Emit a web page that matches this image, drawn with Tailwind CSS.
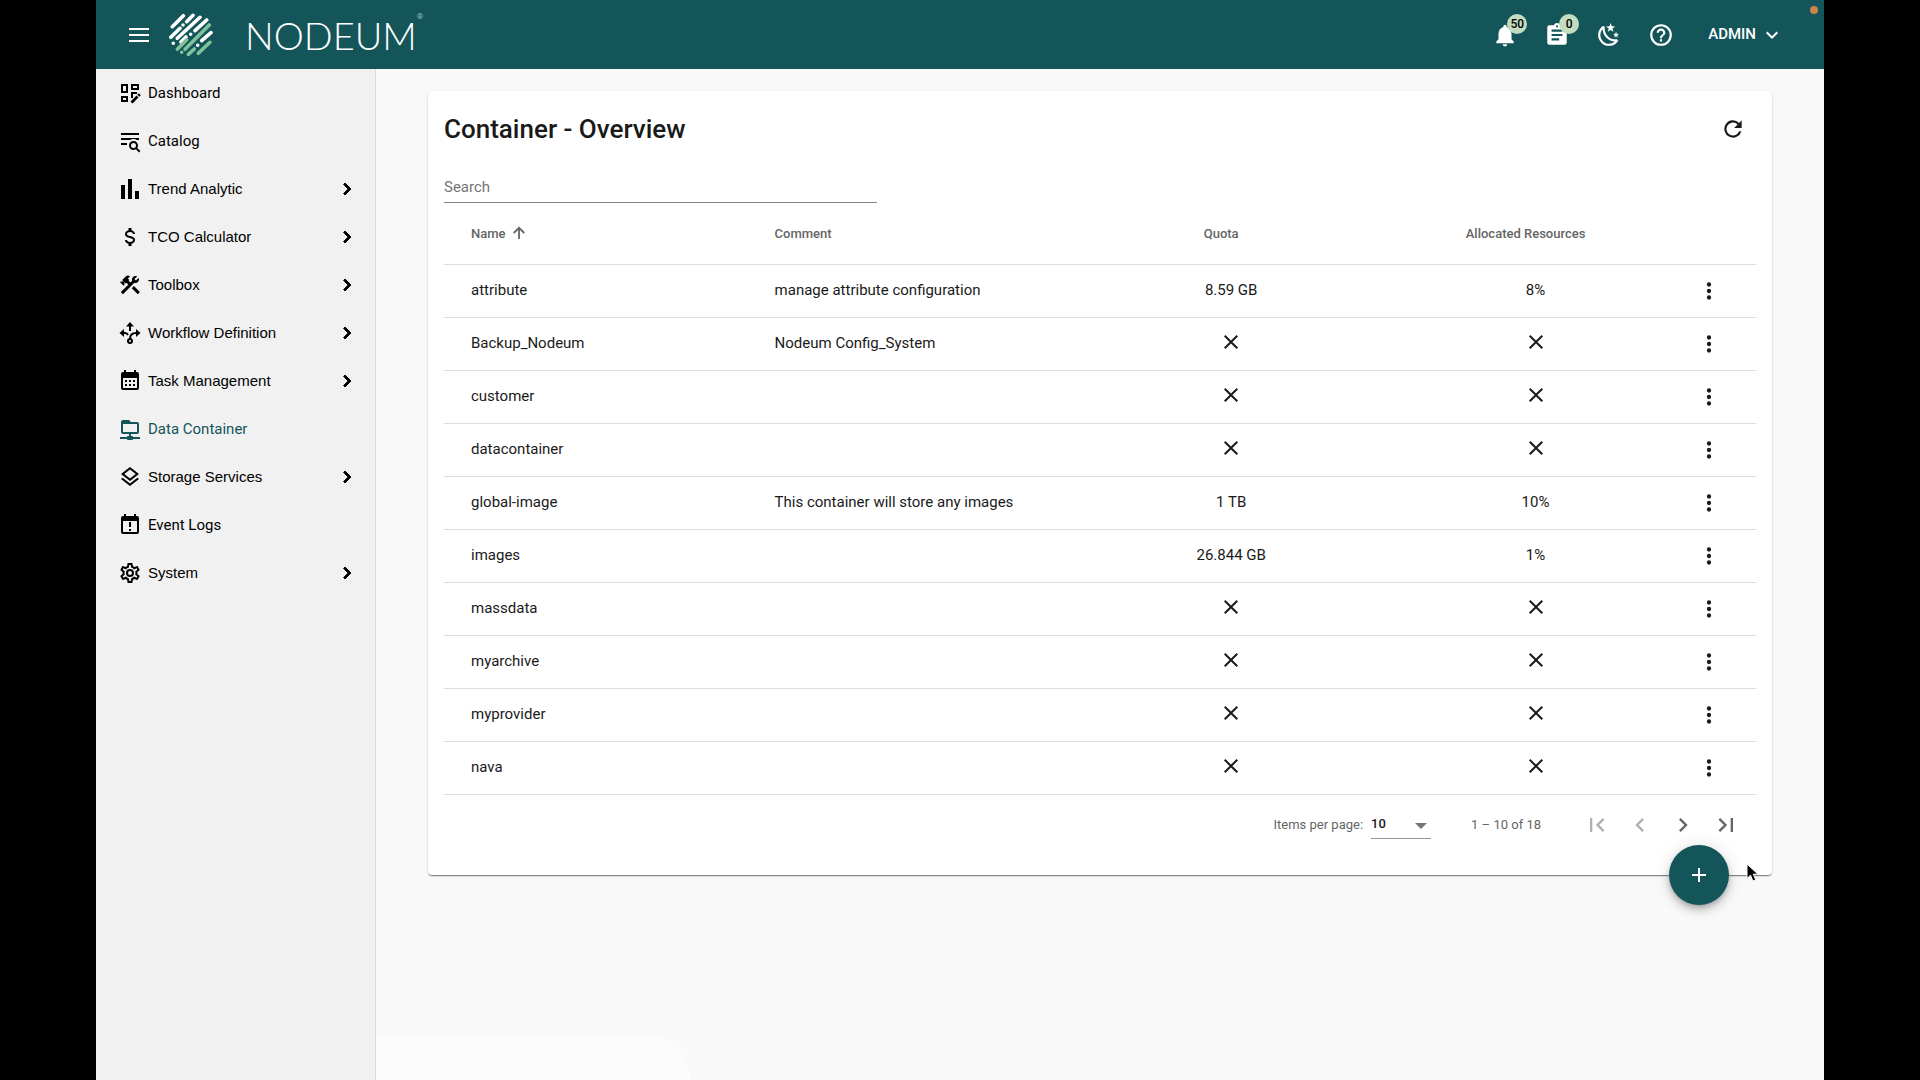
<!DOCTYPE html>
<html lang="en">
<head>
    <meta charset="UTF-8">
    <meta name="viewport" content="width=device-width, initial-scale=1.0">
    <title>Nodeum - Container Overview</title>
    <script src="https://cdn.jsdelivr.net/npm/@tailwindcss/browser@4"></script>
</head>
<body class="bg-black min-h-screen px-24 font-['Roboto',sans-serif] text-[#1a1a1a]">
    <!-- Shared icons -->
    <svg class="hidden" aria-hidden="true">
        <symbol id="chevron" viewBox="0 0 24 24"><path d="M8.59 16.58 13.17 12 8.59 7.41 10 6l6 6-6 6z"/></symbol>
        <symbol id="cross" viewBox="0 0 24 24"><path d="M19 6.41 17.59 5 12 10.59 6.41 5 5 6.41 10.59 12 5 17.59 6.41 19 12 13.41 17.59 19 19 17.59 13.41 12z"/></symbol>
        <symbol id="more" viewBox="0 0 24 24"><path d="M12 8a2 2 0 1 0 0-4 2 2 0 0 0 0 4zm0 2a2 2 0 1 0 0 4 2 2 0 0 0 0-4zm0 6a2 2 0 1 0 0 4 2 2 0 0 0 0-4z"/></symbol>
    </svg>

    <div class="relative min-h-screen flex flex-col bg-[#f9f9f9]">
        <!-- Header -->
        <header class="relative h-[69px] shrink-0 flex items-center justify-between bg-[#14555a] text-white pl-[31px] pr-10">
            <div class="flex items-center">
                <button aria-label="Toggle menu">
                    <svg class="w-6 h-6" fill="currentColor" viewBox="0 0 24 24"><path d="M2 5h20v2H2zM2 11h20v2H2zM2 17h20v2H2z"/></svg>
                </button>
                <a href="#" class="flex items-center ml-4.5" aria-label="Nodeum home">
                    <svg class="w-11 h-11" viewBox="0 0 44 44" fill="none" stroke="#fff" stroke-width="3.6" stroke-linecap="round">
                        <path d="M3.300 13.700 14.300 2.700M14 12v.01M17.700 8.700 24 2.300M1.800 24.300 11 15.300M8.300 25.300 31 4.300M4.300 30.300v.01M21.700 21.300v.01M12 29 17 24M26 17.700 37.700 7M28.700 32.300v.01M32.700 27.700 42 19.700"/>
                        <path stroke="#7fc29b" d="M8.300 36.300 17.700 26.800M12.700 39.300v.01M16 36.300 40.300 12M19.300 41.300 25.300 36M29.300 40.300 41 29.300"/>
                    </svg>
                    <span class="ml-8 text-[38px] leading-none font-['Lato',sans-serif] font-light">NODEUM</span>
                    <span class="self-start text-[8px] leading-none text-[#9cc5bd]">®</span>
                </a>
            </div>
            <div class="flex items-center gap-[26px]">
                <button class="relative" aria-label="Notifications">
                    <svg class="w-[26px] h-[26px]" fill="currentColor" viewBox="0 0 24 24"><path d="M20 18v1.500H4V18l2-2v-5c0-3.100 1.630-5.640 4.500-6.320V4a1.500 1.500 0 0 1 3 0v.68C16.370 5.360 18 7.920 18 11v5l2 2m-6 2.500a2 2 0 0 1-4 0z"/></svg>
                    <span class="absolute -top-2 left-[15px] w-5 h-5 rounded-full bg-[#c2dcbf] text-black text-xs leading-5 font-medium">50</span>
                </button>
                <button class="relative" aria-label="Tasks">
                    <svg class="w-[26px] h-[26px]" fill="currentColor" viewBox="0 0 24 24"><path d="M19 3h-4.180C14.400 1.840 13.300 1 12 1s-2.400.840-2.820 2H5a2 2 0 0 0-2 2v14a2 2 0 0 0 2 2h14a2 2 0 0 0 2-2V5a2 2 0 0 0-2-2m-7 0a1 1 0 1 1 0 2 1 1 0 0 1 0-2m2 14H7v-2h7v2m3-4H7v-2h10v2m0-4H7V7h10v2z"/></svg>
                    <span class="absolute -top-2 left-[15px] w-5 h-5 rounded-full bg-[#c2dcbf] text-black text-xs leading-5 font-medium">0</span>
                </button>
                <button aria-label="Dark mode">
                    <svg class="w-[26px] h-[26px]" fill="currentColor" viewBox="0 0 24 24"><path d="M17.75,4.09L15.22,6.03L16.13,9.09L13.5,7.28L10.87,9.09L11.78,6.03L9.25,4.09L12.44,4L13.5,1L14.56,4L17.75,4.09M21.25,11L19.61,12.25L20.2,14.23L18.5,13.06L16.8,14.23L17.39,12.25L15.75,11L17.81,10.95L18.5,9L19.19,10.95L21.25,11M18.97,15.95C19.8,15.87 20.69,17.05 20.16,17.8C19.84,18.25 19.5,18.67 19.08,19.07C15.17,23 8.84,23 4.94,19.07C1.03,15.17 1.03,8.83 4.94,4.93C5.34,4.53 5.76,4.17 6.21,3.85C6.96,3.32 8.14,4.21 8.06,5.04C7.79,7.9 8.75,10.87 10.95,13.06C13.14,15.26 16.1,16.22 18.97,15.95M17.33,17.97C14.5,17.81 11.7,16.64 9.53,14.5C7.36,12.31 6.2,9.5 6.04,6.68C3.23,9.82 3.34,14.64 6.35,17.66C9.37,20.67 14.19,20.78 17.33,17.97Z"/></svg>
                </button>
                <button aria-label="Help">
                    <svg class="w-[26px] h-[26px]" fill="currentColor" viewBox="0 0 24 24"><path d="M11 18h2v-2h-2v2m1-16a10 10 0 1 0 0 20 10 10 0 0 0 0-20m0 18a8 8 0 1 1 0-16 8 8 0 0 1 0 16m0-14a4 4 0 0 0-4 4h2a2 2 0 1 1 4 0c0 2-3 1.750-3 5h2c0-2.250 3-2.500 3-5a4 4 0 0 0-4-4z"/></svg>
                </button>
                <button class="flex items-center gap-1 ml-2 font-medium text-[15px]">ADMIN
                    <svg class="w-6 h-6 rotate-90" fill="currentColor"><use href="#chevron"/></svg>
                </button>
            </div>
            <span class="absolute top-1.5 right-1.5 w-2 h-2 rounded-full bg-[#c8844a]"></span>
        </header>

        <div class="flex flex-1">
            <!-- Sidebar -->
            <nav class="w-70 shrink-0 bg-[#f1f1f1] border-r border-[#d9d9d9] text-[15px] text-black" aria-label="Main">
                <a href="#" class="flex items-center h-12 pl-[22px] pr-4 gap-1.5">
                    <svg class="w-6 h-6" fill="none" stroke="currentColor" stroke-width="2" viewBox="0 0 24 24"><path d="M4 4h5v7H4zM14 4h6v4h-6zM4 16h5v4H4zM14 17v-5h5"/><path d="M13.500 21.500 19.500 15.500M20.300 14.700l1.500-1.500" stroke-width="2.800"/></svg>
                    Dashboard
                </a>
                <a href="#" class="flex items-center h-12 pl-[22px] pr-4 gap-1.5">
                    <svg class="w-6 h-6" fill="currentColor" viewBox="0 0 24 24"><path d="M19.31 18.9L22.39 22L21 23.39L17.88 20.32C17.19 20.75 16.37 21 15.5 21C13 21 11 19 11 16.5C11 14 13 12 15.5 12C18 12 20 14 20 16.5C20 17.38 19.75 18.21 19.31 18.9M15.5 19A2.5 2.5 0 0 0 18 16.5A2.5 2.5 0 0 0 15.5 14A2.5 2.5 0 0 0 13 16.5A2.5 2.5 0 0 0 15.5 19M21 4V6H3V4H21M3 16V14H9V16H3M3 11V9H21V11H18.97C17.96 10.37 16.77 10 15.5 10C14.23 10 13.04 10.37 12.03 11H3Z"/></svg>
                    Catalog
                </a>
                <button class="flex items-center w-full h-12 pl-[22px] pr-4 gap-1.5 font-['Liberation_Sans',sans-serif]">
                    <svg class="w-6 h-6" fill="currentColor" viewBox="0 0 24 24"><path d="M3 8h4v14H3zM10 2h4v20h-4zM17 14h4v8h-4z"/></svg>
                    Trend Analytic
                    <svg class="w-6 h-6 ml-auto" fill="currentColor" stroke="currentColor"><use href="#chevron"/></svg>
                </button>
                <button class="flex items-center w-full h-12 pl-[22px] pr-4 gap-1.5 font-['Liberation_Sans',sans-serif]">
                    <svg class="w-6 h-6" fill="currentColor" viewBox="0 0 24 24"><path d="M7,15H9C9,16.08 10.37,17 12,17C13.63,17 15,16.08 15,15C15,13.9 13.96,13.5 11.76,12.97C9.64,12.44 7,11.78 7,9C7,7.21 8.47,5.69 10.5,5.18V3H13.5V5.18C15.53,5.69 17,7.21 17,9H15C15,7.92 13.63,7 12,7C10.37,7 9,7.92 9,9C9,10.1 10.04,10.5 12.24,11.03C14.36,11.56 17,12.22 17,15C17,16.79 15.53,18.31 13.5,18.82V21H10.5V18.82C8.47,18.31 7,16.79 7,15Z"/></svg>
                    TCO Calculator
                    <svg class="w-6 h-6 ml-auto" fill="currentColor" stroke="currentColor"><use href="#chevron"/></svg>
                </button>
                <button class="flex items-center w-full h-12 pl-[22px] pr-4 gap-1.5 font-['Liberation_Sans',sans-serif]">
                    <svg class="w-6 h-6" fill="currentColor" viewBox="0 0 24 24"><path d="M13.783 15.172l2.121-2.121 5.996 5.996-2.121 2.121zM17.5 10c1.93 0 3.5-1.57 3.5-3.5 0-.58-.16-1.12-.41-1.6l-2.7 2.7-1.49-1.49 2.7-2.7c-.48-.25-1.02-.41-1.6-.41C15.57 3 14 4.57 14 6.5c0 .41.08.8.21 1.16l-1.85 1.85-1.78-1.78.71-.71-1.41-1.41L12 3.49c-1.17-1.17-3.07-1.17-4.24 0L4.22 7.03l1.41 1.41H2.81l-.71.71 3.54 3.54.71-.71V9.15l1.41 1.41.71-.71 1.78 1.78-7.41 7.41 2.12 2.12L16.34 9.79c.36.13.75.21 1.16.21z"/></svg>
                    Toolbox
                    <svg class="w-6 h-6 ml-auto" fill="currentColor" stroke="currentColor"><use href="#chevron"/></svg>
                </button>
                <button class="flex items-center w-full h-12 pl-[22px] pr-4 gap-1.5 font-['Liberation_Sans',sans-serif]">
                    <svg class="w-6 h-6" fill="none" stroke="currentColor" stroke-width="2" viewBox="0 0 24 24"><path d="M12 4v6M4 12h3q2 0 3 2M20 12h-2q-6 0-6 6"/><circle cx="12" cy="20" r="2"/><path fill="currentColor" stroke="none" d="M12 1l4 4.500H8zM1.500 12 6 8v8zM22.500 12 18 8v8z"/></svg>
                    Workflow Definition
                    <svg class="w-6 h-6 ml-auto" fill="currentColor" stroke="currentColor"><use href="#chevron"/></svg>
                </button>
                <button class="flex items-center w-full h-12 pl-[22px] pr-4 gap-1.5 font-['Liberation_Sans',sans-serif]">
                    <svg class="w-6 h-6" fill="currentColor" viewBox="0 0 24 24"><path d="M19 3h-1V1h-2v2H8V1H6v2H5a2 2 0 0 0-2 2v14a2 2 0 0 0 2 2h14a2 2 0 0 0 2-2V5a2 2 0 0 0-2-2m0 16H5V9h14zM7 11h2v2H7zm4 0h2v2h-2zm4 0h2v2h-2zm-8 4h2v2H7zm4 0h2v2h-2zm4 0h2v2h-2z"/></svg>
                    Task Management
                    <svg class="w-6 h-6 ml-auto" fill="currentColor" stroke="currentColor"><use href="#chevron"/></svg>
                </button>
                <a href="#" class="flex items-center h-12 pl-[22px] pr-4 gap-1.5 text-[#14555a]" aria-current="page">
                    <svg class="w-6 h-6" fill="currentColor" viewBox="0 0 24 24"><path d="M15 20C15 19.45 14.55 19 14 19H13V17H19C20.11 17 21 16.11 21 15V7C21 5.9 20.11 5 19 5H13L11 3H5C3.9 3 3 3.9 3 5V15C3 16.11 3.9 17 5 17H11V19H10C9.45 19 9 19.45 9 20H2V22H9C9 22.55 9.45 23 10 23H14C14.55 23 15 22.55 15 22H22V20H15M5 15V7H19V15H5Z"/></svg>
                    Data Container
                </a>
                <button class="flex items-center w-full h-12 pl-[22px] pr-4 gap-1.5 font-['Liberation_Sans',sans-serif]">
                    <svg class="w-6 h-6" fill="currentColor" viewBox="0 0 24 24"><path d="M12,18.54L19.37,12.8L21,14.07L12,21.07L3,14.07L4.62,12.81L12,18.54M12,16L3,9L12,2L21,9L12,16M12,4.53L6.26,9L12,13.47L17.74,9L12,4.53Z"/></svg>
                    Storage Services
                    <svg class="w-6 h-6 ml-auto" fill="currentColor" stroke="currentColor"><use href="#chevron"/></svg>
                </button>
                <a href="#" class="flex items-center h-12 pl-[22px] pr-4 gap-1.5">
                    <svg class="w-6 h-6" fill="currentColor" viewBox="0 0 24 24"><path d="M19 3h-1V1h-2v2H8V1H6v2H5a2 2 0 0 0-2 2v14a2 2 0 0 0 2 2h14a2 2 0 0 0 2-2V5a2 2 0 0 0-2-2m0 16H5V8h14zM11 9h2v5h-2zM11 16h2v2h-2z"/></svg>
                    Event Logs
                </a>
                <button class="flex items-center w-full h-12 pl-[22px] pr-4 gap-1.5 font-['Liberation_Sans',sans-serif]">
                    <svg class="w-6 h-6" fill="currentColor" viewBox="0 0 24 24"><path d="M12,8A4,4 0 0,1 16,12A4,4 0 0,1 12,16A4,4 0 0,1 8,12A4,4 0 0,1 12,8M12,10A2,2 0 0,0 10,12A2,2 0 0,0 12,14A2,2 0 0,0 14,12A2,2 0 0,0 12,10M10,22C9.75,22 9.54,21.82 9.5,21.58L9.13,18.93C8.5,18.68 7.96,18.34 7.44,17.94L4.95,18.95C4.73,19.03 4.46,18.95 4.34,18.73L2.34,15.27C2.21,15.05 2.27,14.78 2.46,14.63L4.57,12.97L4.5,12L4.57,11L2.46,9.37C2.27,9.22 2.21,8.95 2.34,8.73L4.34,5.27C4.46,5.05 4.73,4.96 4.95,5.05L7.44,6.05C7.96,5.66 8.5,5.32 9.13,5.07L9.5,2.42C9.54,2.18 9.75,2 10,2H14C14.25,2 14.46,2.18 14.5,2.42L14.87,5.07C15.5,5.32 16.04,5.66 16.56,6.05L19.05,5.05C19.27,4.96 19.54,5.05 19.66,5.27L21.66,8.73C21.79,8.95 21.73,9.22 21.54,9.37L19.43,11L19.5,12L19.43,13L21.54,14.63C21.73,14.78 21.79,15.05 21.66,15.27L19.66,18.73C19.54,18.95 19.27,19.04 19.05,18.95L16.56,17.95C16.04,18.34 15.5,18.68 14.87,18.93L14.5,21.58C14.46,21.82 14.25,22 14,22H10M11.25,4L10.88,6.61C9.68,6.86 8.62,7.5 7.85,8.39L5.44,7.35L4.69,8.65L6.8,10.2C6.4,11.37 6.4,12.64 6.8,13.8L4.68,15.36L5.43,16.66L7.86,15.62C8.63,16.5 9.68,17.14 10.87,17.38L11.24,20H12.76L13.13,17.39C14.32,17.14 15.37,16.5 16.14,15.62L18.57,16.66L19.32,15.36L17.2,13.81C17.6,12.64 17.6,11.37 17.2,10.2L19.31,8.65L18.56,7.35L16.15,8.39C15.38,7.5 14.32,6.86 13.12,6.62L12.75,4H11.25Z"/></svg>
                    System
                    <svg class="w-6 h-6 ml-auto" fill="currentColor" stroke="currentColor"><use href="#chevron"/></svg>
                </button>
            </nav>

            <!-- Content -->
            <main class="flex-1 px-[52px] pt-[22px]">
                <section class="relative bg-white rounded px-4 pt-5 pb-5 shadow-[0_2px_1px_-1px_rgba(0,0,0,0.3),0_1px_1px_rgba(0,0,0,0.2),0_1px_3px_rgba(0,0,0,0.12)]">
                    <div class="flex items-center justify-between pr-2.5">
                        <h1 class="text-[26px] leading-9 font-medium">Container - Overview</h1>
                        <button aria-label="Refresh">
                            <svg class="w-[26px] h-[26px]" fill="currentColor" viewBox="0 0 24 24"><path d="M17.650 6.350A8 8 0 1 0 19.730 14h-2.080A6 6 0 1 1 12 6c1.660 0 3.140.690 4.220 1.780L13 11h7V4z"/></svg>
                        </button>
                    </div>

                    <input type="text" placeholder="Search" aria-label="Search" class="block w-[33%] h-8 mt-6 text-[15px] border-b border-[#858585] placeholder:text-[#757575] outline-none">

                    <table class="w-full table-fixed text-[15px]">
                        <colgroup>
                            <col class="w-[25.2%]">
                            <col class="w-[23.2%]">
                            <col class="w-[23.2%]">
                            <col class="w-[23.2%]">
                            <col>
                        </colgroup>
                        <thead>
                            <tr class="h-[61px] border-b border-[#dedede] text-[13px] text-[#656565]">
                                <th class="pl-[27px] text-left font-medium">
                                    <button class="flex items-center gap-1">Name
                                        <svg class="w-[18px] h-[18px]" fill="none" stroke="currentColor" stroke-width="2.400" viewBox="0 0 24 24"><path d="M12 20V5M5 12l7-7 7 7"/></svg>
                                    </button>
                                </th>
                                <th class="text-left font-medium">Comment</th>
                                <th class="pr-5 text-center font-medium">Quota</th>
                                <th class="pr-5 text-center font-medium">Allocated Resources</th>
                                <th></th>
                            </tr>
                        </thead>
                        <tbody>
                            <tr class="h-[53px] border-b border-[#dedede]">
                                <td class="pl-[27px]">attribute</td>
                                <td>manage attribute configuration</td>
                                <td class="text-center">8.59 GB</td>
                                <td class="text-center">8%</td>
                                <td><button class="block ml-2" aria-label="Actions"><svg class="w-[26px] h-[26px]" fill="currentColor"><use href="#more"/></svg></button></td>
                            </tr>
                            <tr class="h-[53px] border-b border-[#dedede]">
                                <td class="pl-[27px]">Backup_Nodeum</td>
                                <td>Nodeum Config_System</td>
                                <td><svg class="w-6 h-6 mx-auto mb-1" fill="currentColor"><use href="#cross"/></svg></td>
                                <td><svg class="w-6 h-6 mx-auto mb-1" fill="currentColor"><use href="#cross"/></svg></td>
                                <td><button class="block ml-2" aria-label="Actions"><svg class="w-[26px] h-[26px]" fill="currentColor"><use href="#more"/></svg></button></td>
                            </tr>
                            <tr class="h-[53px] border-b border-[#dedede]">
                                <td class="pl-[27px]">customer</td>
                                <td></td>
                                <td><svg class="w-6 h-6 mx-auto mb-1" fill="currentColor"><use href="#cross"/></svg></td>
                                <td><svg class="w-6 h-6 mx-auto mb-1" fill="currentColor"><use href="#cross"/></svg></td>
                                <td><button class="block ml-2" aria-label="Actions"><svg class="w-[26px] h-[26px]" fill="currentColor"><use href="#more"/></svg></button></td>
                            </tr>
                            <tr class="h-[53px] border-b border-[#dedede]">
                                <td class="pl-[27px]">datacontainer</td>
                                <td></td>
                                <td><svg class="w-6 h-6 mx-auto mb-1" fill="currentColor"><use href="#cross"/></svg></td>
                                <td><svg class="w-6 h-6 mx-auto mb-1" fill="currentColor"><use href="#cross"/></svg></td>
                                <td><button class="block ml-2" aria-label="Actions"><svg class="w-[26px] h-[26px]" fill="currentColor"><use href="#more"/></svg></button></td>
                            </tr>
                            <tr class="h-[53px] border-b border-[#dedede]">
                                <td class="pl-[27px]">global-image</td>
                                <td>This container will store any images</td>
                                <td class="text-center">1 TB</td>
                                <td class="text-center">10%</td>
                                <td><button class="block ml-2" aria-label="Actions"><svg class="w-[26px] h-[26px]" fill="currentColor"><use href="#more"/></svg></button></td>
                            </tr>
                            <tr class="h-[53px] border-b border-[#dedede]">
                                <td class="pl-[27px]">images</td>
                                <td></td>
                                <td class="text-center">26.844 GB</td>
                                <td class="text-center">1%</td>
                                <td><button class="block ml-2" aria-label="Actions"><svg class="w-[26px] h-[26px]" fill="currentColor"><use href="#more"/></svg></button></td>
                            </tr>
                            <tr class="h-[53px] border-b border-[#dedede]">
                                <td class="pl-[27px]">massdata</td>
                                <td></td>
                                <td><svg class="w-6 h-6 mx-auto mb-1" fill="currentColor"><use href="#cross"/></svg></td>
                                <td><svg class="w-6 h-6 mx-auto mb-1" fill="currentColor"><use href="#cross"/></svg></td>
                                <td><button class="block ml-2" aria-label="Actions"><svg class="w-[26px] h-[26px]" fill="currentColor"><use href="#more"/></svg></button></td>
                            </tr>
                            <tr class="h-[53px] border-b border-[#dedede]">
                                <td class="pl-[27px]">myarchive</td>
                                <td></td>
                                <td><svg class="w-6 h-6 mx-auto mb-1" fill="currentColor"><use href="#cross"/></svg></td>
                                <td><svg class="w-6 h-6 mx-auto mb-1" fill="currentColor"><use href="#cross"/></svg></td>
                                <td><button class="block ml-2" aria-label="Actions"><svg class="w-[26px] h-[26px]" fill="currentColor"><use href="#more"/></svg></button></td>
                            </tr>
                            <tr class="h-[53px] border-b border-[#dedede]">
                                <td class="pl-[27px]">myprovider</td>
                                <td></td>
                                <td><svg class="w-6 h-6 mx-auto mb-1" fill="currentColor"><use href="#cross"/></svg></td>
                                <td><svg class="w-6 h-6 mx-auto mb-1" fill="currentColor"><use href="#cross"/></svg></td>
                                <td><button class="block ml-2" aria-label="Actions"><svg class="w-[26px] h-[26px]" fill="currentColor"><use href="#more"/></svg></button></td>
                            </tr>
                            <tr class="h-[53px] border-b border-[#dedede]">
                                <td class="pl-[27px]">nava</td>
                                <td></td>
                                <td><svg class="w-6 h-6 mx-auto mb-1" fill="currentColor"><use href="#cross"/></svg></td>
                                <td><svg class="w-6 h-6 mx-auto mb-1" fill="currentColor"><use href="#cross"/></svg></td>
                                <td><button class="block ml-2" aria-label="Actions"><svg class="w-[26px] h-[26px]" fill="currentColor"><use href="#more"/></svg></button></td>
                            </tr>
                        </tbody>
                    </table>

                    <!-- Paginator -->
                    <div class="flex items-center justify-end h-15 pr-4 text-[13px] text-[#656565]">
                        <label for="page-size">Items per page:</label>
                        <div class="relative ml-2">
                            <select id="page-size" class="block appearance-none w-15 h-7 border-b border-[#949494] font-medium text-[#1a1a1a]">
                                <option>10</option>
                                <option>20</option>
                                <option>50</option>
                            </select>
                            <svg class="absolute right-1 top-3 w-3 h-1.5 pointer-events-none" fill="#757575" viewBox="0 0 12 6"><path d="M0 0h12L6 6z"/></svg>
                        </div>
                        <span class="ml-10">1 – 10 of 18</span>
                        <div class="flex gap-[15px] ml-[42px]">
                            <button class="text-[#b0b0b0]" aria-label="First page" disabled><svg class="w-7 h-7" fill="currentColor" viewBox="0 0 24 24"><path d="M18.410 16.590 13.820 12l4.590-4.590L17 6l-6 6 6 6zM6 6h2v12H6z"/></svg></button>
                            <button class="text-[#b0b0b0]" aria-label="Previous page" disabled><svg class="w-7 h-7 rotate-180" fill="currentColor"><use href="#chevron"/></svg></button>
                            <button aria-label="Next page"><svg class="w-7 h-7" fill="currentColor"><use href="#chevron"/></svg></button>
                            <button aria-label="Last page"><svg class="w-7 h-7" fill="currentColor" viewBox="0 0 24 24"><path d="M5.590 7.410 10.180 12l-4.590 4.590L7 18l6-6-6-6zM16 6h2v12h-2z"/></svg></button>
                        </div>
                    </div>

                    <button class="absolute right-[43px] -bottom-[30px] w-15 h-15 rounded-full bg-[#14555a] text-white flex items-center justify-center shadow-[0_3px_5px_-1px_rgba(0,0,0,0.2),0_6px_10px_rgba(0,0,0,0.14),0_1px_18px_rgba(0,0,0,0.12)]" aria-label="Add container">
                        <svg class="w-6 h-6" fill="currentColor" viewBox="0 0 24 24"><path d="M19 13h-6v6h-2v-6H5v-2h6V5h2v6h6z"/></svg>
                    </button>
                    <!-- Mouse pointer -->
                    <svg class="absolute right-3 -bottom-2 w-3.5 h-5" viewBox="0 0 14 20" fill="#000" stroke="#fff" aria-hidden="true"><path d="M1 1v14.500l3.500-3.300 2.400 5.800 2.800-1.200-2.400-5.600H12z"/></svg>
                </section>
            </main>
        </div>

        <!-- Empty status bubble -->
        <div class="absolute bottom-0 left-70 w-[314px] h-[43px] bg-white/50 rounded-tr-[40px]"></div>
    </div>
</body>
</html>
